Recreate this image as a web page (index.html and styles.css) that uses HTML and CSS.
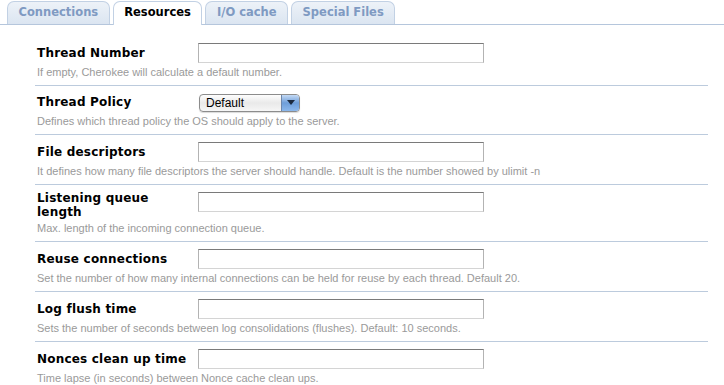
FILE: index.html
```html
<!DOCTYPE html>
<html lang="en">
<head>
    <meta charset="UTF-8">
    <title>Cherokee Admin - Advanced</title>
    <link rel="stylesheet" href="styles.css">
</head>
<body>

<div class="tabs">
    <a href="#" class="tab">Connections</a>
    <a href="#" class="tab active">Resources</a>
    <a href="#" class="tab">I/O cache</a>
    <a href="#" class="tab">Special Files</a>
</div>

<div class="panel">
    <div class="row">
        <div class="field">
            <label class="label">Thread Number</label>
            <input type="text" class="entry">
        </div>
        <div class="help">If empty, Cherokee will calculate a default number.</div>
    </div>

    <div class="row">
        <div class="field">
            <label class="label">Thread Policy</label>
            <div class="select">
                <span class="select-text">Default</span>
                <span class="select-arrow">
                    <svg width="8" height="5" viewBox="0 0 8 5"><path d="M0 0 L8 0 L4 5 Z" fill="#1c2a3e"/></svg>
                </span>
            </div>
        </div>
        <div class="help">Defines which thread policy the OS should apply to the server.</div>
    </div>

    <div class="row">
        <div class="field">
            <label class="label">File descriptors</label>
            <input type="text" class="entry">
        </div>
        <div class="help">It defines how many file descriptors the server should handle. Default is the number showed by ulimit -n</div>
    </div>

    <div class="row tall">
        <div class="field">
            <label class="label">Listening queue length</label>
            <input type="text" class="entry">
        </div>
        <div class="help">Max. length of the incoming connection queue.</div>
    </div>

    <div class="row">
        <div class="field">
            <label class="label">Reuse connections</label>
            <input type="text" class="entry">
        </div>
        <div class="help">Set the number of how many internal connections can be held for reuse by each thread. Default 20.</div>
    </div>

    <div class="row">
        <div class="field">
            <label class="label">Log flush time</label>
            <input type="text" class="entry">
        </div>
        <div class="help">Sets the number of seconds between log consolidations (flushes). Default: 10 seconds.</div>
    </div>

    <div class="row">
        <div class="field">
            <label class="label">Nonces clean up time</label>
            <input type="text" class="entry">
        </div>
        <div class="help">Time lapse (in seconds) between Nonce cache clean ups.</div>
    </div>
</div>

</body>
</html>
```

FILE: styles.css
```css
body {
    margin: 0;
    padding: 0;
    background-color: #fff;
    font-family: 'DejaVu Sans', Verdana, sans-serif;
    color: #000;
}
.tabs {
    display: flex;
    gap: 3px;
    padding: 1px 0 0 7px;
    border-bottom: 1px solid #b5c6dc;
    height: 23px;
}
.tab {
    display: block;
    height: 22px;
    line-height: 21px;
    padding: 0 10.5px;
    font-size: 11.5px;
    font-weight: bold;
    color: #7f9ac2;
    text-decoration: none;
    background: linear-gradient(#edf2f8, #dbe5f1);
    border: 1px solid #c2d1e4;
    border-bottom: none;
    border-radius: 7px 7px 0 0;
}
.tab.active {
    background: #fff;
    color: #000;
    height: 23px;
    margin-bottom: -1px;
    position: relative;
}
.panel {
    margin: 0 16px 0 35px;
    padding-top: 11px;
}
.row {
    padding: 7px 0 5px 2px;
    border-top: 1px solid #bccbdd;
}
.row:first-child {
    border-top: none;
}
.field {
    display: flex;
    align-items: center;
    min-height: 19px;
}
.label {
    width: 161px;
    flex-shrink: 0;
    font-size: 12px;
    font-weight: bold;
    line-height: 15px;
    letter-spacing: 0.2px;
}
.row.tall .field {
    align-items: flex-start;
    height: 27px;
}
.row.tall .label {
    width: 130px;
    margin-top: -1px;
    margin-right: 31px;
    line-height: 14px;
}
.entry {
    width: 286px;
    height: 20px;
    box-sizing: border-box;
    margin: 0;
    padding: 1px 3px;
    border: 1px solid #b3b3b3;
    border-top-color: #7a7a7a;
    border-bottom-color: #d4d4d4;
    font-size: 11px;
    background: #fff;
}
.select {
    display: flex;
    align-items: stretch;
    width: 101px;
    height: 18px;
    box-sizing: border-box;
    margin-left: 1px;
    border: 1px solid #8c8c8c;
    border-radius: 4px;
    overflow: hidden;
    background: linear-gradient(#fdfdfd, #e9e9e9 50%, #f6f6f6);
    box-shadow: 0 1px 1px rgba(0, 0, 0, 0.15);
}
.select-text {
    flex-grow: 1;
    padding-left: 6px;
    font-family: 'Liberation Sans', Arial, sans-serif;
    font-size: 12px;
    line-height: 16px;
}
.select-arrow {
    width: 17px;
    display: flex;
    align-items: center;
    justify-content: center;
    border-left: 1px solid #6d87ac;
    background: linear-gradient(#c4daf5, #6e9ed9 50%, #8cb8ec);
}
.help {
    padding-top: 2px;
    font-family: 'Liberation Sans', Arial, sans-serif;
    font-size: 11px;
    line-height: 15px;
    color: #9a9a9a;
    white-space: nowrap;
}
```
